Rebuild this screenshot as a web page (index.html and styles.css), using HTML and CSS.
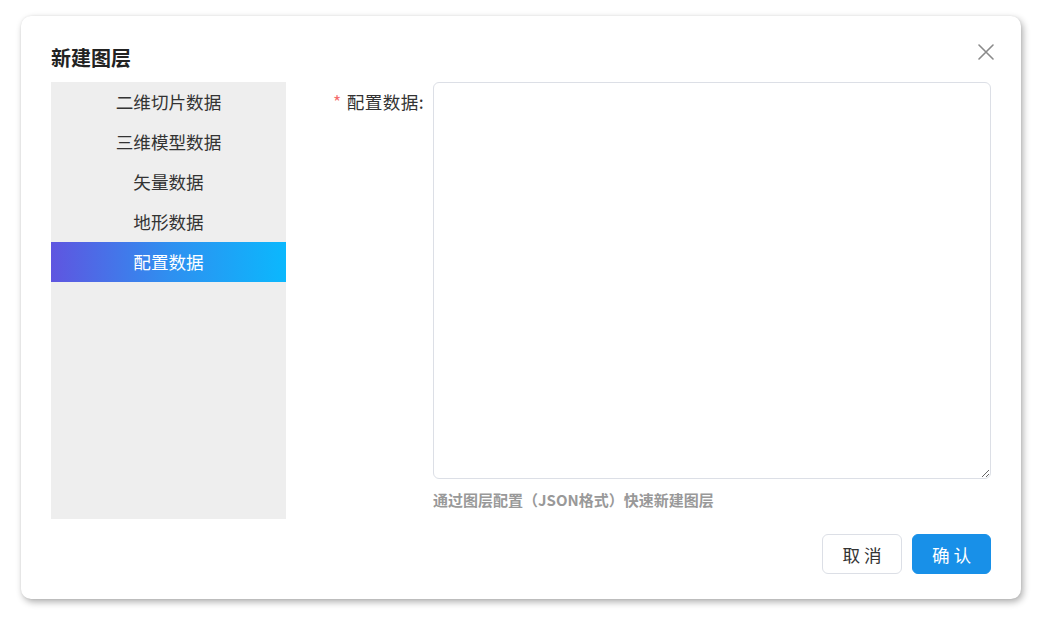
FILE: index.html
```html
<!DOCTYPE html>
<html lang="zh">
<head>
<meta charset="utf-8">
<title>新建图层</title>
<link rel="stylesheet" href="styles.css">
</head>
<body>
<div class="page">
  <div class="dialog">
    <div class="header">
      <span class="title">新建图层</span>
      <button class="close" aria-label="关闭">
        <svg width="16" height="16" viewBox="0 0 16 16"><path d="M1 1L15 15M15 1L1 15" stroke="#8a8a8a" stroke-width="1.6" fill="none" stroke-linecap="round"/></svg>
      </button>
    </div>
    <div class="body">
      <ul class="menu">
        <li class="item">二维切片数据</li>
        <li class="item">三维模型数据</li>
        <li class="item">矢量数据</li>
        <li class="item">地形数据</li>
        <li class="item active">配置数据</li>
      </ul>
      <div class="form">
        <label class="label"><span class="star">*</span>配置数据:</label>
        <div class="field">
          <textarea class="textarea"></textarea>
          <div class="hint">通过图层配置（JSON格式）快速新建图层</div>
        </div>
      </div>
    </div>
    <div class="footer">
      <button class="btn cancel">取 消</button>
      <button class="btn ok">确 认</button>
    </div>
  </div>
</div>
</body>
</html>
```
FILE: styles.css
```css
* { box-sizing: border-box; }
html, body { margin: 0; padding: 0; background: #ffffff; }
body { font-family: "Noto Sans CJK SC", "Noto Sans", sans-serif; color: #333; }
.page { padding: 16px 19px 21px 21px; }
.dialog {
  position: relative;
  width: 1000px;
  height: 583px;
  background: #fff;
  border-radius: 10px;
  box-shadow: 2px 3px 7px rgba(0,0,0,0.32), 0 0 2px rgba(0,0,0,0.08);
  padding: 0 30px 25px 30px;
  display: flex;
  flex-direction: column;
}
.header { height: 66px; padding-top: 28px; }
.title { font-size: 20px; font-weight: 700; line-height: 28px; color: #222; display: block; }
.close {
  position: absolute; top: 28px; right: 27px;
  width: 16px; height: 16px; padding: 0; border: 0; background: none;
  display: flex; cursor: pointer;
}
.body { display: flex; height: 437px; }
.menu {
  list-style: none; margin: 0; padding: 0;
  width: 235px; height: 437px; background: #eeeeee;
}
.item {
  height: 40px; line-height: 40px; text-align: center;
  font-size: 17.6px; color: #333;
}
.item.active {
  background: linear-gradient(90deg, #5f55e0 0%, #2f8ff0 50%, #0bb8fd 100%);
  color: #fff;
}
.form { flex: 1; display: flex; }
.label {
  width: 147px; padding-right: 9px; text-align: right;
  font-size: 17.6px; line-height: 40px; color: #333; white-space: nowrap;
  letter-spacing: 0.4px;
}
.star { color: #f56c6c; margin-right: 5px; }
.field { flex: 1; display: flex; flex-direction: column; }
.textarea {
  width: 558px; height: 397px; margin: 0;
  border: 1px solid #dcdfe6; border-radius: 6px;
  resize: vertical; font-family: inherit; outline: none;
}
.hint {
  margin-top: 10px; font-size: 15px; font-weight: 700; color: #999;
  line-height: 22px;
}
.footer { margin-top: 15px; display: flex; justify-content: flex-end; gap: 10px; }
.btn {
  height: 40px; border-radius: 6px; font-family: inherit;
  font-size: 17.6px; cursor: pointer; padding: 0;
}
.cancel { width: 80px; background: #fff; border: 1px solid #dcdfe6; color: #333; }
.ok { width: 79px; background: #1890e8; border: 1px solid #1890e8; color: #fff; }
```
